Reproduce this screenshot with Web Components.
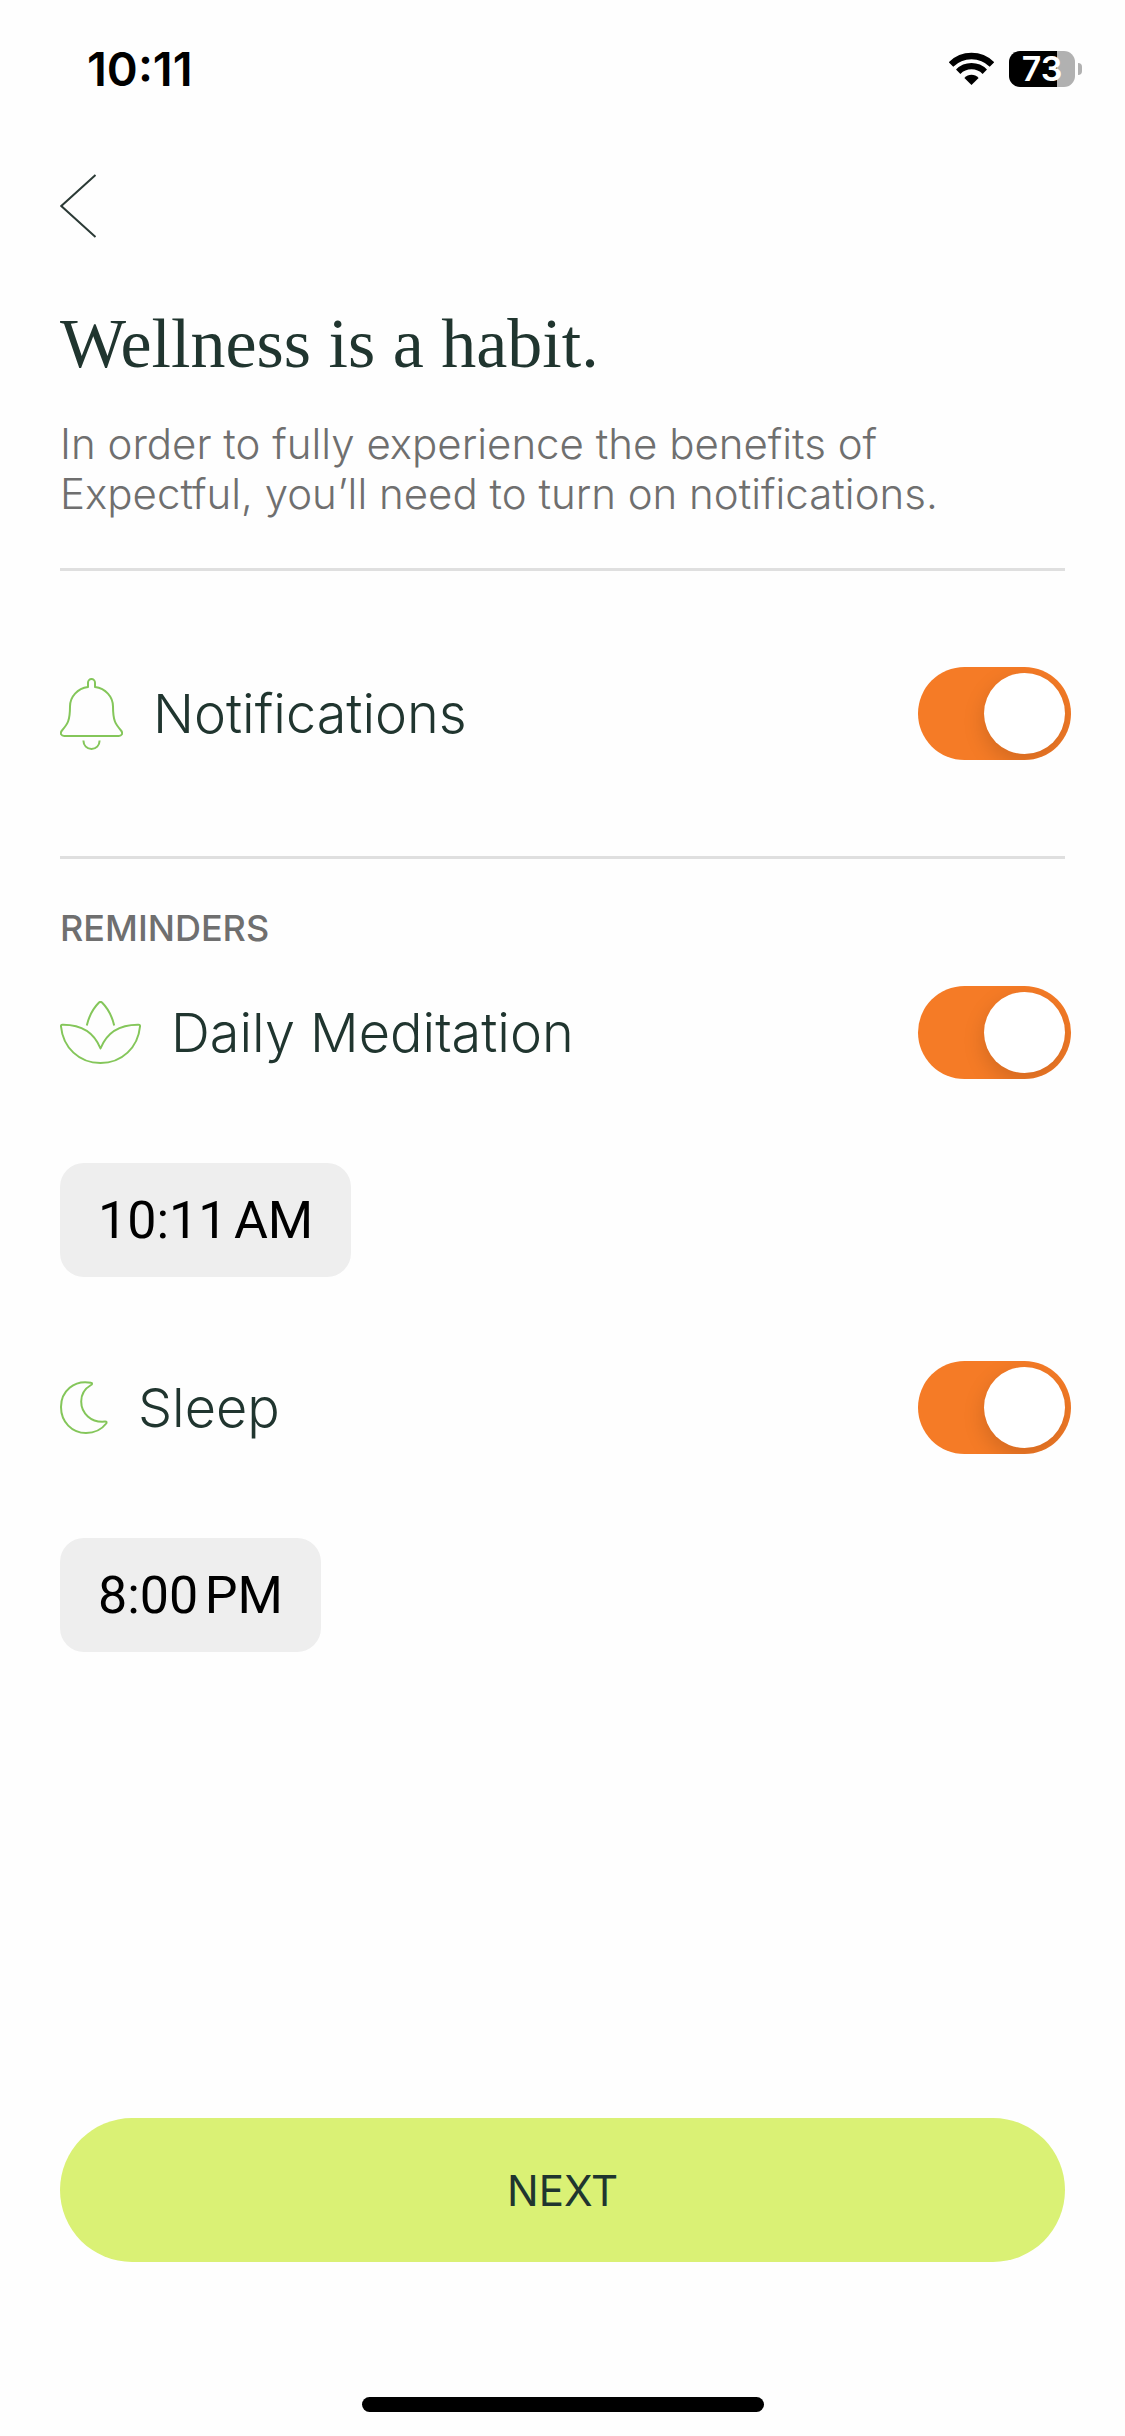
<!DOCTYPE html>
<html lang="en">
<head>
<meta charset="utf-8">
<meta name="viewport" content="width=device-width, initial-scale=1">
<title>Wellness is a habit.</title>
<style>
    body {
        margin: 0;
        background: #fefefe;
        color: #20352f;
        font-family: Inter, "Liberation Sans", sans-serif;
    }
</style>
</head>
<body>
<notification-screen></notification-screen>

<script>
class StatusBar extends HTMLElement {
    connectedCallback() {
        this.attachShadow({ mode: 'open' });
        this.shadowRoot.innerHTML = `
            <style>
                :host {
                    display: flex;
                    justify-content: space-between;
                    align-items: center;
                    height: 137px;
                    padding: 0 43px 0 87px;
                    color: #000;
                }
                .time {
                    font-size: 47px;
                    font-weight: 600;
                }
                .indicators {
                    display: flex;
                    align-items: center;
                }
                .wifi {
                    margin-right: 15px;
                }
                .battery {
                    display: flex;
                    justify-content: center;
                    align-items: center;
                    width: 66px;
                    height: 36px;
                    border-radius: 11px;
                    background: linear-gradient(90deg, #000 73%, #b1b1b1 73%);
                    color: #fff;
                    font-size: 34px;
                    font-weight: 600;
                }
                .tip {
                    width: 4px;
                    height: 12px;
                    margin-left: 3px;
                    border-radius: 0 4px 4px 0;
                    background: #b1b1b1;
                }
            </style>
            <span class="time">10:11</span>
            <div class="indicators">
                <svg class="wifi" width="45" height="33" viewBox="0 0 45 33" fill="none" stroke="#000" aria-hidden="true">
                    <path stroke-width="6.4" d="M2 12.5A29 29 0 0 1 43 12.5"/>
                    <path stroke-width="6.2" d="M9.2 19.7A18.8 18.8 0 0 1 35.8 19.7"/>
                    <path fill="#000" stroke="none" d="M22.5 33L15.4 25.9C19.2 21.6 25.8 21.6 29.6 25.9Z"/>
                </svg>
                <span class="battery">73</span>
                <span class="tip"></span>
            </div>
        `;
    }
}
customElements.define('status-bar', StatusBar);

class BackButton extends HTMLElement {
    connectedCallback() {
        this.attachShadow({ mode: 'open' });
        this.shadowRoot.innerHTML = `
            <style>
                :host {
                    display: block;
                }
                button {
                    display: block;
                    padding: 0;
                    border: 0;
                    background: none;
                    cursor: pointer;
                }
                svg {
                    display: block;
                }
            </style>
            <button type="button" aria-label="Back">
                <svg width="38" height="64" viewBox="0 0 38 64" fill="none" stroke="#2b3a36" stroke-width="2">
                    <path d="M35.5 1L1.3 32L35.5 63"/>
                </svg>
            </button>
        `;
    }
}
customElements.define('back-button', BackButton);

const icons = {
    bell: `
        <svg width="63" height="72" viewBox="0 0 63 72">
            <path d="M28 9V4.8a3.5 3.7 0 0 1 7 0V9C45.5 10.5 53 18.5 53 28.5C53 43 55.5 46 61 52.5C63.5 55.5 61.5 58 58.8 58H4.2C1.5 58 -.5 55.5 2 52.5C7.5 46 10 43 10 28.5C10 18.5 17.5 10.5 28 9Z"/>
            <path d="M23.4 62.5C23.4 67.5 27 71 31.5 71S39.6 67.5 39.6 62.5"/>
        </svg>`,
    lotus: `
        <svg width="81" height="63" viewBox="0 0 81 63">
            <path d="M26.8 24.5C29 15 33 7.5 39 1.5Q40.5 .3 42 1.5C48 7.5 52 15 54.2 24.5"/>
            <path d="M2.5 23.7C22 23.5 34 31 40.5 47.5C47 31 59 23.5 78.5 23.7Q80.2 23.8 80 25.5C78 46.5 62 62 40.5 62S3 46.5 1 25.5Q.8 23.8 2.5 23.7Z"/>
        </svg>`,
    moon: `
        <svg width="48" height="53" viewBox="0 0 48 53">
            <path d="M31 1.8C14 -1.5 1 10.5 1 26C1 41 12 52 26 52C35 52 42 48 46.2 42.5C47 41 46.3 40.3 45 40.6C31 42 21.2 32 21.2 20.5C21.2 13 25 7.5 31 4C32.5 3 32.3 2 31 1.8Z"/>
        </svg>`
};

class ToggleRow extends HTMLElement {
    connectedCallback() {
        this.attachShadow({ mode: 'open' });
        this.shadowRoot.innerHTML = `
            <style>
                :host {
                    display: flex;
                    align-items: center;
                    padding: 0 54px 0 60px;
                }
                label {
                    display: flex;
                    flex: 1;
                    align-items: center;
                    gap: 30px;
                    font-size: 54px;
                    font-weight: 300;
                    line-height: 64px;
                }
                svg {
                    fill: none;
                    stroke: #84c65a;
                    stroke-width: 2;
                    stroke-linejoin: round;
                }
                input {
                    appearance: none;
                    box-sizing: border-box;
                    display: flex;
                    width: 153px;
                    height: 93px;
                    margin: 0;
                    padding: 6px;
                    border-radius: 47px;
                    background: #dedede;
                    overflow: hidden;
                    cursor: pointer;
                }
                input:checked {
                    justify-content: flex-end;
                    background: #f57b26;
                }
                input::before {
                    content: "";
                    width: 81px;
                    height: 81px;
                    border-radius: 50%;
                    background: #fff;
                    box-shadow: 0 8px 22px rgba(0, 0, 0, 0.15);
                }
            </style>
            <label for="toggle">${icons[this.getAttribute('icon')]}<slot></slot></label>
            <input type="checkbox" role="switch" id="toggle" checked>
        `;
    }
}
customElements.define('toggle-row', ToggleRow);

class TimeButton extends HTMLElement {
    connectedCallback() {
        this.attachShadow({ mode: 'open' });
        this.shadowRoot.innerHTML = `
            <style>
                :host {
                    display: block;
                    padding: 0 60px;
                }
                button {
                    display: block;
                    height: 114px;
                    padding: 0 38px;
                    border: 0;
                    border-radius: 24px;
                    background: #eee;
                    color: #000;
                    font-family: Roboto, Inter, sans-serif;
                    font-size: 52px;
                    cursor: pointer;
                }
            </style>
            <button type="button"><slot></slot></button>
        `;
    }
}
customElements.define('time-button', TimeButton);

class NextButton extends HTMLElement {
    connectedCallback() {
        this.attachShadow({ mode: 'open' });
        this.shadowRoot.innerHTML = `
            <style>
                :host {
                    display: block;
                    padding: 0 60px;
                }
                button {
                    display: block;
                    width: 100%;
                    height: 144px;
                    border: 0;
                    border-radius: 72px;
                    background: #daf175;
                    color: #20352f;
                    font-family: inherit;
                    font-size: 42px;
                    cursor: pointer;
                }
            </style>
            <button type="button"><slot></slot></button>
        `;
    }
}
customElements.define('next-button', NextButton);

class NotificationScreen extends HTMLElement {
    connectedCallback() {
        this.attachShadow({ mode: 'open' });
        this.shadowRoot.innerHTML = `
            <style>
                :host {
                    display: flex;
                    flex-direction: column;
                    min-height: 100vh;
                }
                header {
                    padding: 37px 60px 49px;
                }
                h1 {
                    margin: 66px 0 35px;
                    font-family: "Liberation Serif", serif;
                    font-size: 70px;
                    font-weight: 400;
                    line-height: 80px;
                }
                p {
                    margin: 0;
                    color: #6f6f6f;
                    font-size: 42px;
                    font-weight: 300;
                    line-height: 50px;
                }
                hr {
                    width: calc(100% - 120px);
                    height: 3px;
                    margin: 0 60px;
                    border: 0;
                    background: #dfdfdf;
                }
                .main-toggle {
                    margin: 96px 0;
                }
                h2 {
                    margin: 48px 60px 36px;
                    color: #6f6f6f;
                    font-size: 36px;
                    font-weight: 500;
                    line-height: 43px;
                }
                .reminder + .reminder {
                    margin-top: 84px;
                }
                time-button {
                    margin-top: 84px;
                }
                footer {
                    margin-top: auto;
                    padding-bottom: 24px;
                }
                .home-indicator {
                    width: 402px;
                    height: 15px;
                    margin: 135px auto 0;
                    border-radius: 8px;
                    background: #000;
                }
            </style>
            <status-bar></status-bar>
            <header>
                <back-button></back-button>
                <h1>Wellness is a habit.</h1>
                <p>In order to fully experience the benefits of<br>Expectful, you’ll need to turn on notifications.</p>
            </header>
            <hr>
            <toggle-row class="main-toggle" icon="bell">Notifications</toggle-row>
            <hr>
            <h2>REMINDERS</h2>
            <div class="reminder">
                <toggle-row icon="lotus">Daily Meditation</toggle-row>
                <time-button>10:11&#8239;AM</time-button>
            </div>
            <div class="reminder">
                <toggle-row icon="moon">Sleep</toggle-row>
                <time-button>8:00&#8239;PM</time-button>
            </div>
            <footer>
                <next-button>NEXT</next-button>
                <div class="home-indicator"></div>
            </footer>
        `;
    }
}
customElements.define('notification-screen', NotificationScreen);
</script>
</body>
</html>
